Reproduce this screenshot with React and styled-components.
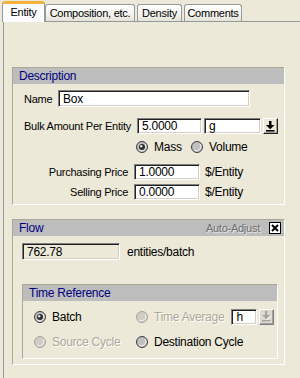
import React from 'react';
import styled, { createGlobalStyle } from 'styled-components';

const GlobalStyle = createGlobalStyle`
  body {
    margin: 0;
    background: #ece9d8;
    font-family: 'Liberation Sans', Arial, sans-serif;
    font-size: 11px;
    letter-spacing: -0.25px;
    color: #000;
  }
`;

// little drawings: radio, down arrow, checked box
const Radio = ({ checked, disabled }) => (
  <svg width='12' height='12' viewBox='0 0 12 12'>
    <circle cx='6' cy='6' r='5.5' fill={disabled ? '#cfcdc5' : '#c0c0c0'} stroke={disabled ? '#a5a39a' : '#3c3c3c'} />
    <path d='M3 9.2A4.5 4.5 0 0 0 9.2 3' fill='none' stroke='#f2f2f2' strokeWidth='1' />
    {checked && (
      <>
        <circle cx='6' cy='6' r='3' fill='#2c2c2c' />
        <circle cx='5.2' cy='5.2' r='1.2' fill='#e8e8e8' />
      </>
    )}
  </svg>
);

const DownArrow = ({ disabled }) => (
  <svg width='9' height='11' viewBox='0 0 9 11'>
    {disabled && <path d='M4 1h2v4h3l-4 4-4-4h3zM1 10h9v1H1z' fill='#fff' />}
    <path d='M3 0h2.5v4H8.5L4.25 8.2 0 4h3z' fill={disabled ? '#a5a39a' : '#000'} />
    <rect x='0' y='9' width='8.5' height='1.6' fill={disabled ? '#a5a39a' : '#000'} />
  </svg>
);

const CheckX = () => (
  <svg width='12' height='12' viewBox='0 0 12 12'>
    <rect x='0.5' y='0.5' width='11' height='11' fill='#fff' stroke='#000' />
    <path d='M3 3l6 6M9 3l-6 6' stroke='#000' strokeWidth='2' />
  </svg>
);

const App = () => {
  return (
    <>
      <GlobalStyle />
      <Window>
        {/* tab header */}
        <TabStrip>
          <Tab active w={43}>Entity</Tab>
          <Tab w={90}>Composition, etc.</Tab>
          <Tab w={45}>Density</Tab>
          <Tab w={58}>Comments</Tab>
        </TabStrip>

        <TabPage>
          {/* Description group */}
          <GroupBox w={273}>
            <GroupHeader>Description</GroupHeader>
            <DescBody>
              <Row h={17}>
                <Label w={34}>Name</Label>
                <Field w={192} h={17}>Box</Field>
              </Row>
              <Row h={16} top={11}>
                <Label w={113}>Bulk Amount Per Entity</Label>
                <Field w={65}>5.0000</Field>
                <Field w={57} gap={2}>g</Field>
                <DropButton gap={2}>
                  <DownArrow />
                </DropButton>
              </Row>
              <RadioRow>
                <Option>
                  <Radio checked />
                  Mass
                </Option>
                <Option>
                  <Radio />
                  Volume
                </Option>
              </RadioRow>
              <Row h={16} top={12}>
                <Label w={104} right>Purchasing Price</Label>
                <Field w={66} gap={6}>1.0000</Field>
                <Unit>$/Entity</Unit>
              </Row>
              <Row h={16} top={4}>
                <Label w={104} right>Selling Price</Label>
                <Field w={66} gap={6}>0.0000</Field>
                <Unit>$/Entity</Unit>
              </Row>
            </DescBody>
          </GroupBox>

          {/* Flow group */}
          <GroupBox w={273} top={14}>
            <GroupHeader>
              Flow
              <HeaderTools>
                <Dim dark>Auto-Adjust</Dim>
                <CheckX />
              </HeaderTools>
            </GroupHeader>
            <FlowBody>
              <Row h={17}>
                <Field w={98} h={17} disabled>762.78</Field>
                <Unit gap={7}>entities/batch</Unit>
              </Row>

              <GroupBox w={256} top={24}>
                <GroupHeader>Time Reference</GroupHeader>
                <TimeGrid>
                  <Option>
                    <Radio checked />
                    Batch
                  </Option>
                  <Cell>
                    <Option>
                      <Radio disabled />
                      <Dim>Time Average</Dim>
                    </Option>
                    <Field w={26} gap={7}>h</Field>
                    <DropButton gap={2} disabled>
                      <DownArrow disabled />
                    </DropButton>
                  </Cell>
                  <Option>
                    <Radio disabled />
                    <Dim>Source Cycle</Dim>
                  </Option>
                  <Option>
                    <Radio />
                    Destination Cycle
                  </Option>
                </TimeGrid>
              </GroupBox>
            </FlowBody>
          </GroupBox>
        </TabPage>
      </Window>
    </>
  );
};

export default App;

// Styled Components Area
const Window = styled.div`
  width: 300px;
  height: 378px;
  overflow: hidden;
  background: #ece9d8;
`;

const TabStrip = styled.div`
  display: flex;
  align-items: flex-end;
  height: 21px;
  padding-left: 2px;
  position: relative;
  z-index: 1;
`;

const Tab = styled.div`
  box-sizing: border-box;
  width: ${(p) => p.w}px;
  height: ${(p) => (p.active ? 21 : 17)}px;
  margin-right: ${(p) => (p.active ? 0 : 2)}px;
  margin-bottom: ${(p) => (p.active ? -1 : 0)}px;
  display: flex;
  align-items: center;
  justify-content: center;
  white-space: nowrap;
  border: 1px solid #919b9c;
  border-bottom: none;
  border-radius: 3px 3px 0 0;
  background: ${(p) => (p.active ? '#fcfcfe' : 'linear-gradient(#fff, #f3f2ec 60%, #e4e2d8)')};
  border-top: ${(p) => (p.active ? '3px solid #f6b03c' : '1px solid #919b9c')};
  padding-bottom: ${(p) => (p.active ? 2 : 0)}px;
`;

const TabPage = styled.div`
  box-sizing: border-box;
  margin-left: 3px;
  height: 357px;
  border-top: 1px solid #919b9c;
  border-left: 1px solid #919b9c;
  padding: 45px 0 0 8px;
`;

const GroupBox = styled.div`
  box-sizing: border-box;
  width: ${(p) => p.w}px;
  margin-top: ${(p) => p.top || 0}px;
  border: 1px solid;
  border-color: #aca899 #fff #fff #aca899;
`;

const GroupHeader = styled.div`
  height: 16px;
  line-height: 16px;
  padding: 0 3px 0 6px;
  background: #bdbdbd;
  color: #000080;
  font-size: 12px;
  display: flex;
  align-items: center;
  justify-content: space-between;
`;

const HeaderTools = styled.div`
  display: flex;
  align-items: center;
  gap: 9px;
  font-size: 11px;
`;

const DescBody = styled.div`
  padding: 6px 0 4px 11px;
`;

const FlowBody = styled.div`
  padding: 7px 0 5px 9px;
`;

const Row = styled.div`
  display: flex;
  align-items: center;
  height: ${(p) => p.h}px;
  margin-top: ${(p) => p.top || 0}px;
`;

const Label = styled.span`
  width: ${(p) => p.w}px;
  text-align: ${(p) => (p.right ? 'right' : 'left')};
  white-space: nowrap;
`;

const Field = styled.div`
  box-sizing: border-box;
  width: ${(p) => p.w}px;
  height: ${(p) => p.h || 16}px;
  margin-left: ${(p) => p.gap || 0}px;
  padding-left: 4px;
  display: flex;
  align-items: center;
  background: ${(p) => (p.disabled ? '#ece9d8' : '#fff')};
  border: 1px solid;
  border-color: #808080 #fff #fff #808080;
  box-shadow: inset 1px 1px 0 #202020, inset -1px -1px 0 #d4d0c8;
  font-size: 12px;
`;

const DropButton = styled.div`
  box-sizing: border-box;
  width: 15px;
  height: 16px;
  margin-left: ${(p) => p.gap || 0}px;
  display: flex;
  align-items: center;
  justify-content: center;
  background: ${(p) => (p.disabled ? '#dcdad2' : '#ece9d8')};
  border: 1px solid;
  border-color: #fff ${(p) => (p.disabled ? '#808080' : '#202020')} ${(p) => (p.disabled ? '#808080' : '#202020')} #fff;
  box-shadow: inset -1px -1px 0 #a0a0a0;
`;

const Unit = styled.span`
  margin-left: ${(p) => p.gap || 5}px;
  white-space: nowrap;
  font-size: 12px;
`;

const RadioRow = styled.div`
  display: grid;
  grid-template-columns: 55px auto;
  height: 12px;
  margin-top: 6px;
  padding-left: 112px;
`;

const Option = styled.div`
  display: flex;
  align-items: center;
  gap: 6px;
  white-space: nowrap;
  font-size: 12px;
`;

const Dim = styled.span`
  color: ${(p) => (p.dark ? '#6e6e6e' : '#aca899')};
  text-shadow: 1px 1px 0 ${(p) => (p.dark ? '#e8e8e8' : '#fff')};
  white-space: nowrap;
`;

const TimeGrid = styled.div`
  display: grid;
  grid-template-columns: 102px auto;
  grid-auto-rows: 25px;
  align-items: center;
  padding: 3px 0 4px 11px;
`;

const Cell = styled.div`
  display: flex;
  align-items: center;
`;
